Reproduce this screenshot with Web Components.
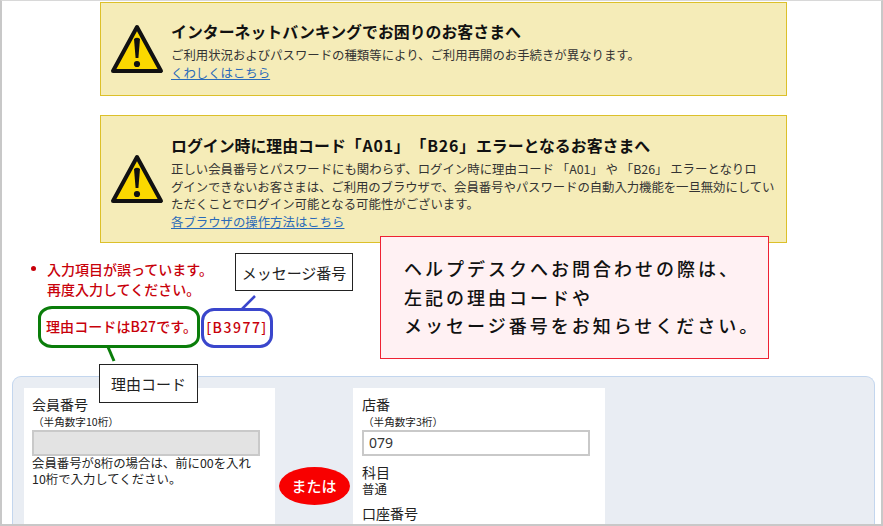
<!DOCTYPE html>
<html lang="ja">
<head>
<meta charset="utf-8">
<title>ログイン</title>
<style>
html, body { margin: 0; padding: 0; height: 100%; overflow: hidden; background: #fff; }
body { font-family: "Noto Sans CJK JP", "Noto Sans", sans-serif; font-size: 13px; color: #222; text-spacing-trim: space-all; }
</style>
</head>
<body>
<login-page>
  <alert-box slot="alerts" link="くわしくはこちら" style="height:94px;--pad:17px">
    <span slot="heading">インターネットバンキングでお困りのお客さまへ</span>
    ご利用状況およびパスワードの種類等により、ご利用再開のお手続きが異なります。
  </alert-box>
  <alert-box slot="alerts" link="各ブラウザの操作方法はこちら" style="height:128px;--pad:18px">
    <span slot="heading">ログイン時に理由コード<span style="letter-spacing:.8px">「A01」「B26」</span>エラーとなるお客さまへ</span>
    正しい会員番号とパスワードにも関わらず、ログイン時に理由コード 「A01」 や 「B26」 エラーとなりロ<br><span style="letter-spacing:-.06px">グインできないお客さまは、ご利用のブラウザで、会員番号やパスワードの自動入力機能を一旦無効にしてい</span><br>ただくことでログイン可能となる可能性がございます。
  </alert-box>
  <error-notes slot="errors"></error-notes>
  <help-note slot="errors"></help-note>
  <form-panel slot="form"></form-panel>
</login-page>

<script>
class LoginPage extends HTMLElement {
  constructor() {
    super();
    this.attachShadow({ mode: 'open' }).innerHTML = `
<style>
:host { display: block; box-sizing: border-box; width: 883px; height: 526px; overflow: hidden;
  border-left: 2px solid #c8c8c8; border-right: 2px solid #c8c8c8; border-top: 1px solid #d8d8d8; border-bottom: 2px solid #c8c8c8; }
.alerts { display: flex; flex-direction: column; gap: 19px; margin: 1px 0 0 98px; width: 687px; }
.errors { position: relative; height: 133px; }
.form { margin-left: 10px; width: 863px; }
</style>
<div class="alerts"><slot name="alerts"></slot></div>
<div class="errors"><slot name="errors"></slot></div>
<div class="form"><slot name="form"></slot></div>`;
  }
}

class AlertBox extends HTMLElement {
  constructor() {
    super();
    this.attachShadow({ mode: 'open' }).innerHTML = `
<style>
:host { display: flex; box-sizing: border-box; align-items: flex-start; background: #f5ecb8; border: 1px solid #dcc02a; padding: 0 9px; color: #333; }
svg { flex: none; align-self: center; width: 54px; height: 52px; margin-right: 7px; }
.text { padding-top: var(--pad, 17px); white-space: nowrap; }
h2 { margin: 0 0 3px; font-size: 15.9px; line-height: 24px; font-weight: 700; color: #111; }
p { margin: 0; font-size: 12.4px; line-height: 17.5px; }
a { color: #2a6ab8; text-decoration: underline; font-size: 12.4px; line-height: 16px; display: block; }
</style>
<svg viewBox="0 0 54 52">
  <path d="M27 4 L51 48 H3 Z" fill="#fbd800" stroke="#111" stroke-width="4" stroke-linejoin="round"/>
  <path d="M24 16 Q27 13.5 30 16 L28.4 35 H25.6 Z" fill="#111"/>
  <circle cx="27" cy="41" r="3.1" fill="#111"/>
</svg>
<div class="text">
  <h2><slot name="heading"></slot></h2>
  <p><slot></slot></p>
  <a href="#"></a>
</div>`;
  }
  connectedCallback() {
    this.shadowRoot.querySelector('a').textContent = this.getAttribute('link');
  }
}

class ErrorNotes extends HTMLElement {
  constructor() {
    super();
    this.attachShadow({ mode: 'open' }).innerHTML = `
<style>
:host { display: block; position: absolute; inset: 0; color: #c8000a; font-size: 14px; font-weight: 500; }
ul { margin: 0; padding: 0; position: absolute; left: 45px; top: 16px; list-style: none; line-height: 20px; white-space: nowrap; }
li::before { content: ""; position: absolute; left: -16px; top: 7px; width: 5px; height: 5px; border-radius: 50%; background: #c8000a; }
.ring { position: absolute; box-sizing: border-box; display: flex; align-items: center; justify-content: center; white-space: nowrap; padding-bottom: 2px; }
.reason { left: 36px; top: 63px; width: 162px; height: 42px; border: 3px solid #0a7d0a; border-radius: 14px / 12px; padding-left: 5px; letter-spacing: .1px; }
.code { left: 199px; top: 65px; width: 72px; height: 40px; border: 3px solid #3a46cc; border-radius: 13px; letter-spacing: 1.5px; }
.label { position: absolute; box-sizing: border-box; background: #fff; border: 1px solid #222; color: #222; font-weight: 400; font-size: 15px; display: flex; align-items: center; justify-content: center; white-space: nowrap; z-index: 2; }
.l1 { left: 233px; top: 10px; width: 118px; height: 38px; }
.l2 { left: 97px; top: 121px; width: 99px; height: 39px; }
svg { position: absolute; overflow: visible; }
</style>
<ul><li>入力項目が誤っています。<br>再度入力してください。</li></ul>
<div class="ring reason">理由コードはB27です。</div>
<div class="ring code">[B3977]</div>
<svg style="left:0;top:0" width="1" height="1">
  <line x1="253" y1="53" x2="240" y2="66" stroke="#3a46cc" stroke-width="2.5"/>
  <line x1="106" y1="104" x2="112" y2="118" stroke="#0a7d0a" stroke-width="3"/>
</svg>
<div class="label l1">メッセージ番号</div>
<div class="label l2">理由コード</div>`;
  }
}

class HelpNote extends HTMLElement {
  constructor() {
    super();
    this.attachShadow({ mode: 'open' }).innerHTML = `
<style>
:host { display: block; position: absolute; box-sizing: border-box; left: 378px; top: -7px; width: 389px; height: 123px; z-index: 3;
  background: #fff1f3; border: 1px solid #ee2233; padding: 17px 0 0 23px; color: #111; font-size: 18px; line-height: 28.5px; letter-spacing: 3px; font-weight: 500; white-space: nowrap; }
</style>
ヘルプデスクへお問合わせの際は、<br>左記の理由コードや<br>メッセージ番号をお知らせください。`;
  }
}

class FormField extends HTMLElement {
  constructor() {
    super();
    this.attachShadow({ mode: 'open' }).innerHTML = `
<style>
:host { display: block; }
.label { font-size: 14px; line-height: 18px; color: #222; margin-bottom: 2px; }
.sub { font-size: 10.6px; line-height: 14px; padding-left: 1px; color: #222; }
.box { box-sizing: border-box; height: 26px; border: 2px solid #c9c9c9; margin-top: 1px; padding-left: 5px; font: 14px/22px "Noto Sans", "Noto Sans CJK JP", sans-serif; color: #333; background: #fff; }
:host([disabled]) .box { background: #e3e3e3; }
</style>
<div class="label"></div>
<div class="sub"></div>
<div class="box"></div>
<slot></slot>`;
  }
  connectedCallback() {
    const s = this.shadowRoot;
    s.querySelector('.label').textContent = this.getAttribute('label');
    s.querySelector('.sub').textContent = this.getAttribute('sub');
    s.querySelector('.box').textContent = this.getAttribute('value') || '';
  }
}

class FormPanel extends HTMLElement {
  constructor() {
    super();
    this.attachShadow({ mode: 'open' }).innerHTML = `
<style>
:host { display: flex; box-sizing: border-box; height: 160px; padding: 11px 11px 0; background: #e9edf3; border: 1px solid #c3d6ee; border-bottom: 0; border-radius: 9px 9px 0 0; }
.card { box-sizing: border-box; width: 251px; background: #fff; padding: 7px 15px 0 8px; color: #222; }
.card.b { width: 252px; padding: 7px 15px 0 9px; }
.or { flex: none; width: 78px; display: flex; justify-content: center; padding-top: 79px; }
.or span { box-sizing: border-box; width: 71px; height: 38px; border-radius: 50%; background: #f80000; color: #fff; font-size: 15px; font-weight: 500; line-height: 37px; text-align: center; }
p { margin: 0; font-size: 12.4px; line-height: 16px; }
.note { white-space: nowrap; margin-top: -1px; }
.lab { font-size: 14px; line-height: 18px; }
</style>
<div class="card">
  <form-field label="会員番号" sub="（半角数字10桁）" disabled>
  </form-field>
  <p class="note">会員番号が8桁の場合は、前に00を入れ<br>10桁で入力してください。</p>
</div>
<div class="or"><span>または</span></div>
<div class="card b">
  <form-field label="店番" sub="（半角数字3桁）" value="079"></form-field>
  <div class="lab" style="margin-top:7px">科目</div>
  <p>普通</p>
  <div class="lab" style="margin-top:7px">口座番号</div>
</div>`;
  }
}

customElements.define('login-page', LoginPage);
customElements.define('alert-box', AlertBox);
customElements.define('error-notes', ErrorNotes);
customElements.define('help-note', HelpNote);
customElements.define('form-field', FormField);
customElements.define('form-panel', FormPanel);
</script>
</body>
</html>
